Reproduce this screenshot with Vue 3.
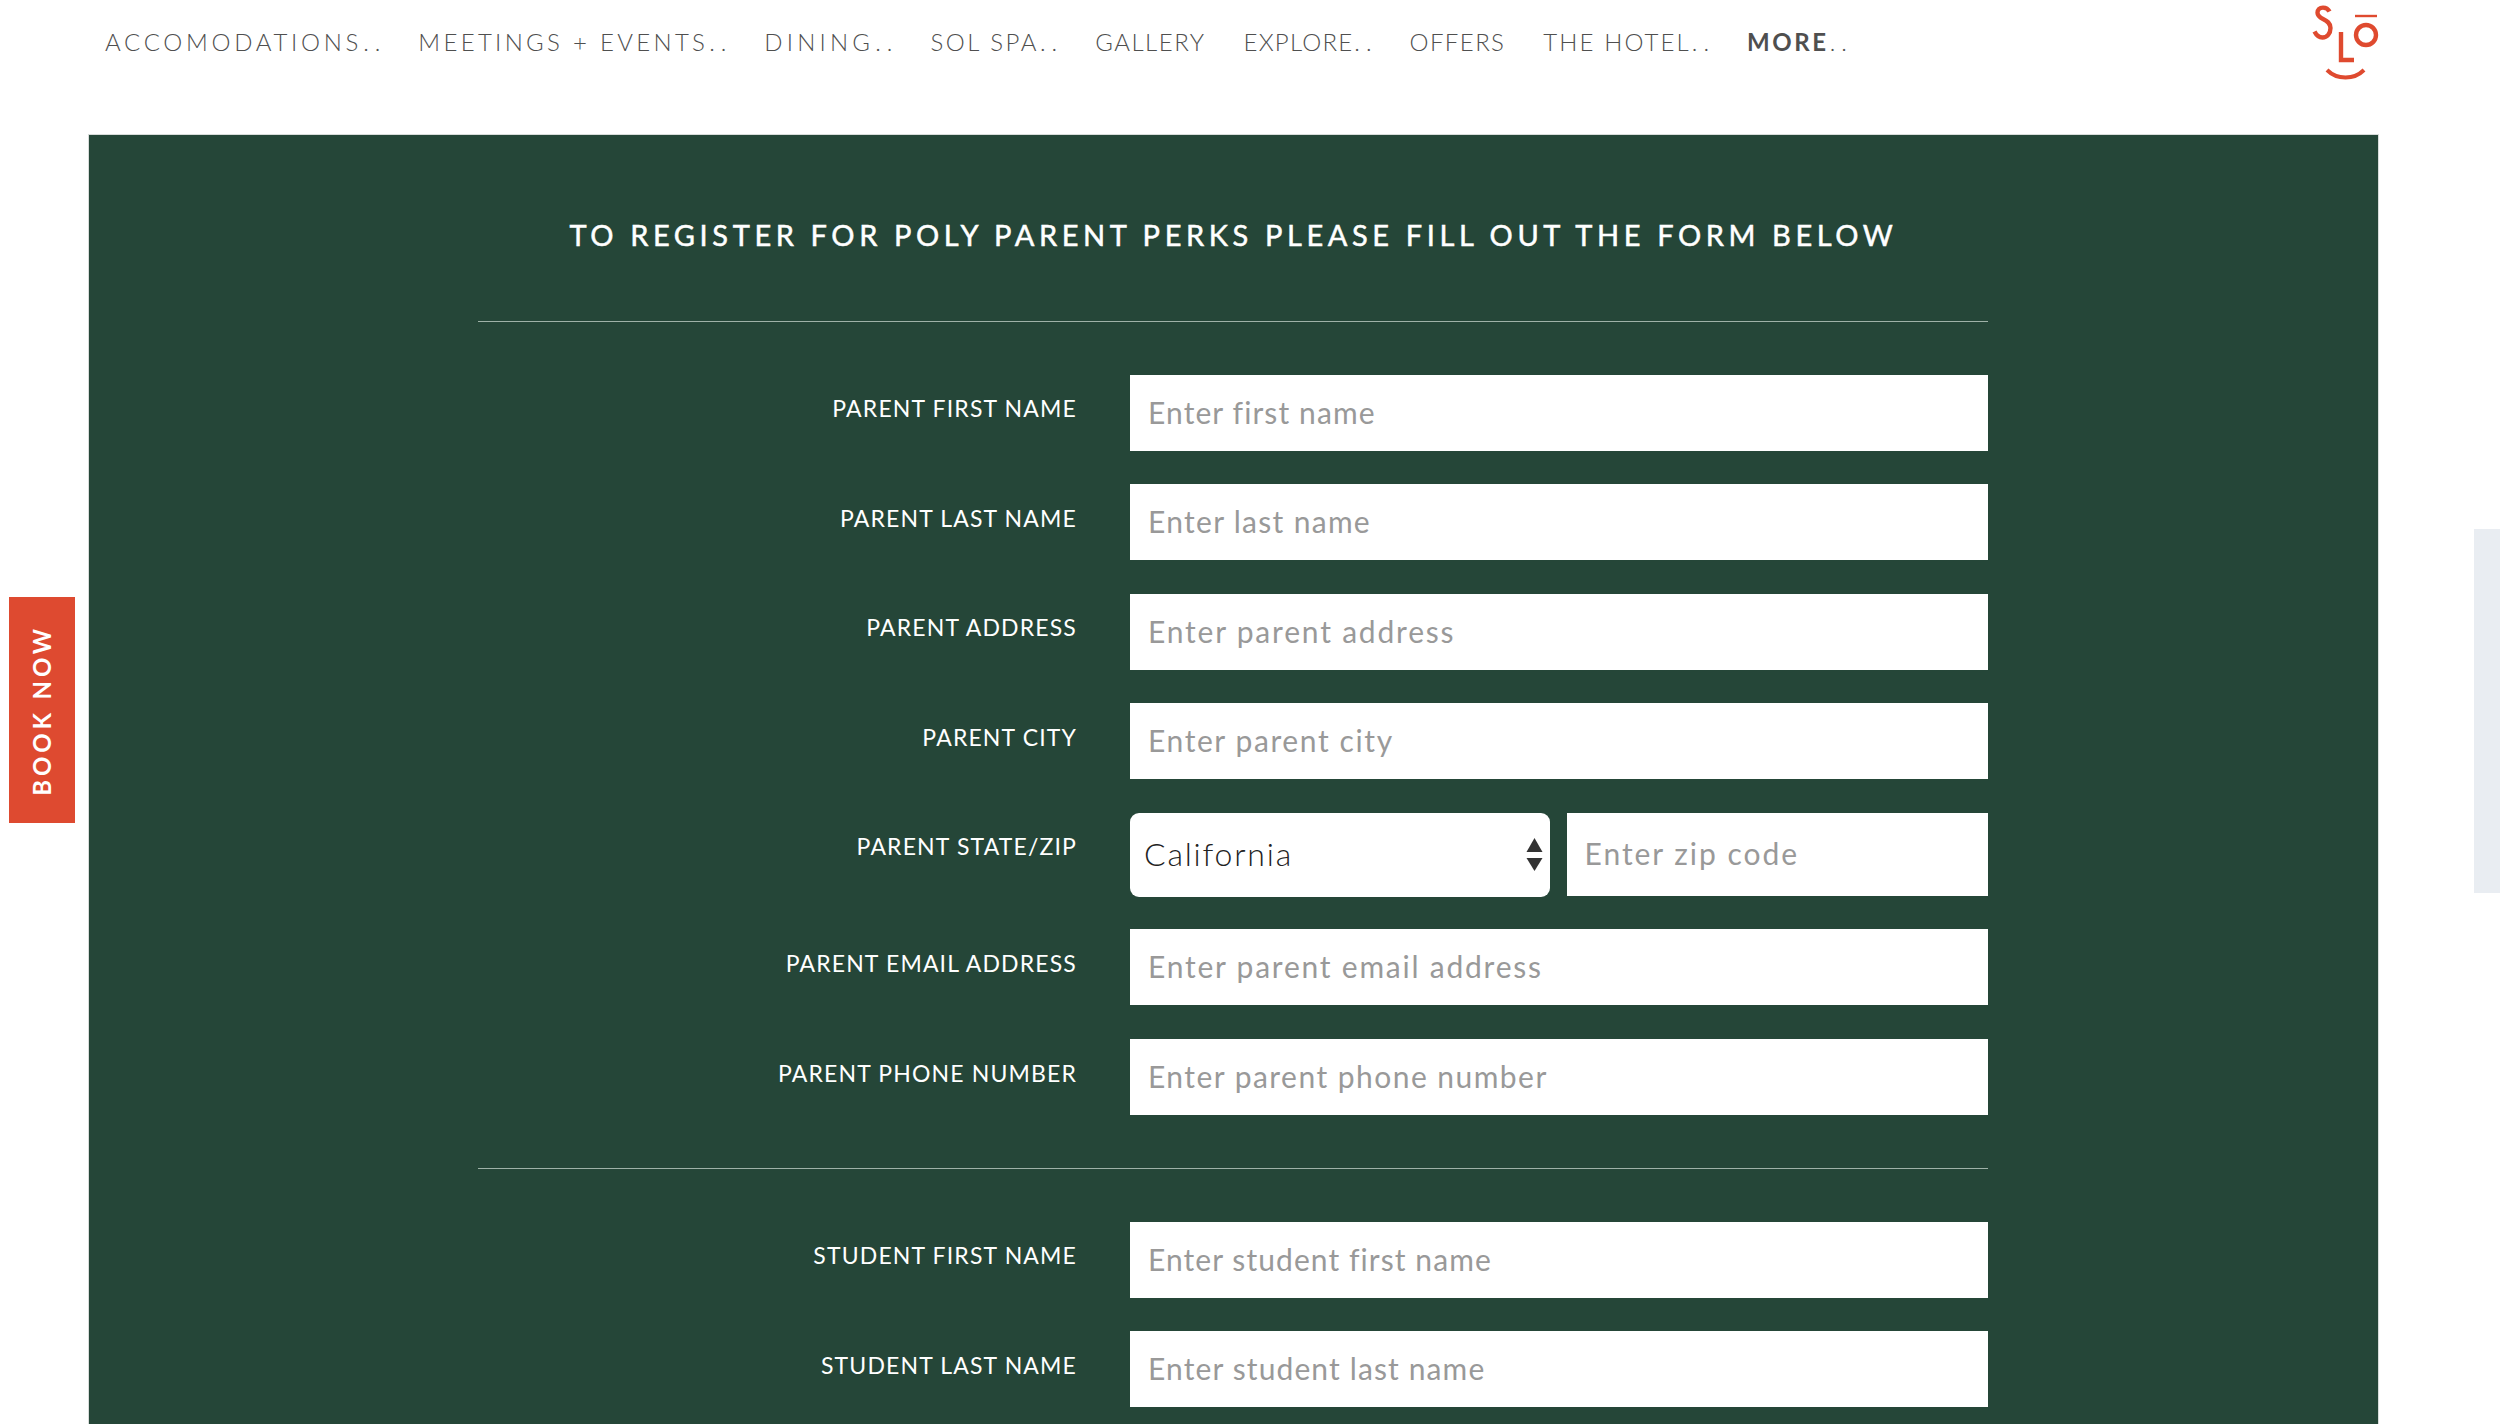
<script setup>
const nav = [
  { t: 'ACCOMODATIONS', d: true, ls: 3.7 },
  { t: 'MEETINGS + EVENTS', d: true, ls: 3.3 },
  { t: 'DINING', d: true, ls: 4.2 },
  { t: 'SOL SPA', d: true, ls: 2.5 },
  { t: 'GALLERY', d: false, ls: 1.5 },
  { t: 'EXPLORE', d: true, ls: 1.2 },
  { t: 'OFFERS', d: false, ls: 1.4 },
  { t: 'THE HOTEL', d: true, ls: 2.1 }
]
const parent = [
  ['PARENT FIRST NAME', 'Enter first name', 1.1],
  ['PARENT LAST NAME', 'Enter last name', 1.3],
  ['PARENT ADDRESS', 'Enter parent address', 1.8],
  ['PARENT CITY', 'Enter parent city', 1.6]
]
const parent2 = [
  ['PARENT EMAIL ADDRESS', 'Enter parent email address', 1.77],
  ['PARENT PHONE NUMBER', 'Enter parent phone number', 1.46]
]
const student = [
  ['STUDENT FIRST NAME', 'Enter student first name', 1.07],
  ['STUDENT LAST NAME', 'Enter student last name', 1.12]
]
</script>

<template>
  <div class="page">
    <header class="head">
      <nav class="nav">
        <a v-for="n in nav" :key="n.t" class="item" :style="{ letterSpacing: n.ls + 'px' }">{{ n.t }}<span v-if="n.d" class="dots">..</span></a>
        <a class="item more"><b>MORE</b><span class="dots">..</span></a>
      </nav>
      <svg class="logo" width="70" height="84" viewBox="0 0 70 84" fill="none" stroke="#df4a2f" stroke-width="4.400">
        <path d="M19.500 11.500C18 8.500 15.500 7.600 13 7.600C9.500 7.600 7.500 10 7.500 12.800C7.500 16 10 17.500 13 19C17 21 20.500 23 20.500 28C20.500 33.500 17 37.500 12.500 37.500C9 37.500 6.500 35.500 4.500 31.500" />
        <path d="M31 32V60H44"/>
        <circle cx="56" cy="35" r="10"/>
        <path d="M45 16H67" stroke-width="2.400"/>
        <path d="M17 70C27 80 44 80 54 70" stroke-width="4"/>
      </svg>
    </header>

    <main class="panel">
      <h1 class="title">TO REGISTER FOR POLY PARENT PERKS PLEASE FILL OUT THE FORM BELOW</h1>
      <form class="form">
        <hr class="rule" />
        <div class="rows">
          <label v-for="r in parent" :key="r[0]" class="row">
            <span class="lbl">{{ r[0] }}</span>
            <input class="inp" :placeholder="r[1]" :style="{ letterSpacing: r[2] + 'px' }" />
          </label>
          <div class="row state">
            <span class="lbl">PARENT STATE/ZIP</span>
            <div class="pair">
              <div class="selwrap">
                <select class="sel"><option>California</option></select>
                <svg class="arrows" width="17" height="34" viewBox="0 0 17 34" fill="#333">
                  <path d="M8.500 0L16.500 14H0.500Z"/>
                  <path d="M0.500 20H16.500L8.500 33Z"/>
                </svg>
              </div>
              <input class="inp" placeholder="Enter zip code" />
            </div>
          </div>
          <label v-for="r in parent2" :key="r[0]" class="row">
            <span class="lbl">{{ r[0] }}</span>
            <input class="inp" :placeholder="r[1]" :style="{ letterSpacing: r[2] + 'px' }" />
          </label>
        </div>
        <hr class="rule second" />
        <div class="rows">
          <label v-for="r in student" :key="r[0]" class="row">
            <span class="lbl">{{ r[0] }}</span>
            <input class="inp" :placeholder="r[1]" :style="{ letterSpacing: r[2] + 'px' }" />
          </label>
        </div>
      </form>
    </main>

    <a class="book"><span>BOOK NOW</span></a>
    <div class="side"></div>
  </div>
</template>

<style>
html, body { margin: 0; background: #fff; overflow: hidden; }
</style>

<style scoped>
.page {
  position: relative;
  width: 2500px;
  height: 1424px;
  overflow: hidden;
  background: #fff;
  font-family: Lato, "Liberation Sans", sans-serif;
}
.head {
  height: 135px;
  display: flex;
  justify-content: space-between;
  align-items: flex-start;
  padding: 0 120px 0 105px;
  box-sizing: border-box;
}
.nav {
  display: flex;
  gap: 38px;
  padding-top: 27px;
  color: #4f4f4f;
  font-size: 24px;
  line-height: 30px;
  font-weight: 300;
}
.item { white-space: nowrap; }
.dots { letter-spacing: 6px; margin-left: 1px; margin-right: -6px; }
.more { letter-spacing: 2.600px; }
.more b { font-weight: 700; }
.logo { display: block; }
.panel {
  margin-left: 89px;
  width: 2289px;
  height: 1289px;
  background: #254638;
  box-shadow: 0 0 0 1px #d8dcda;
  color: #fff;
  overflow: hidden;
}
.title {
  margin: 0;
  padding-top: 80px;
  height: 106px;
  text-align: center;
  font-size: 29px;
  line-height: 40px;
  font-weight: 400;
  letter-spacing: 4.600px;
  -webkit-text-stroke: 0.5px #fff;
  white-space: nowrap;
}
.form {
  width: 1510px;
  margin-left: 389px;
}
.rule {
  margin: 0;
  border: 0;
  height: 1px;
  background: #9fb2a8;
}
.second { margin-top: 53px; }
.rows {
  display: flex;
  flex-direction: column;
  gap: 33.600px;
  padding-top: 52.500px;
}
.row {
  display: flex;
  align-items: flex-start;
  gap: 53px;
}
.lbl {
  width: 599px;
  flex: none;
  text-align: right;
  font-size: 23px;
  line-height: 26px;
  letter-spacing: 1.150px;
  padding-top: 20.500px;
  font-weight: 400;
}
.state .lbl { padding-top: 20px; }
.inp {
  display: block;
  width: 858px;
  height: 76px;
  box-sizing: border-box;
  border: 0;
  border-radius: 0;
  outline: 0;
  padding: 0 18px 2px;
  background: #fff;
  font: 400 30px Lato, "Liberation Sans", sans-serif;
  letter-spacing: 1.400px;
  color: #222;
}
.inp::placeholder { color: #999; opacity: 1; }
.pair {
  display: flex;
  align-items: flex-start;
  gap: 17px;
  width: 858px;
  height: 83px;
}
.pair .inp { flex: 1; width: auto; min-width: 0; height: 83px; letter-spacing: 1.970px; }
.selwrap { position: relative; width: 419.500px; flex: none; }
.sel {
  display: block;
  appearance: none;
  -webkit-appearance: none;
  width: 100%;
  height: 84px;
  border: 0;
  border-radius: 9px;
  background: #fff;
  padding: 0 14px 2px;
  font: 300 32px Lato, "Liberation Sans", sans-serif;
  letter-spacing: 1.800px;
  color: #222;
}
.arrows {
  position: absolute;
  right: 7px;
  top: 25px;
  pointer-events: none;
}
.book {
  position: absolute;
  left: 9px;
  top: 597px;
  width: 66px;
  height: 226px;
  background: #de4a30;
  color: #fff;
  display: flex;
  align-items: center;
  justify-content: center;
}
.book span {
  writing-mode: vertical-rl;
  transform: rotate(180deg);
  font-size: 24px;
  font-weight: 700;
  letter-spacing: 3.900px;
  white-space: nowrap;
  margin-left: -2px;
}
.side {
  position: absolute;
  left: 2474px;
  top: 529px;
  width: 26px;
  height: 364px;
  background: #e9edf2;
}
</style>
